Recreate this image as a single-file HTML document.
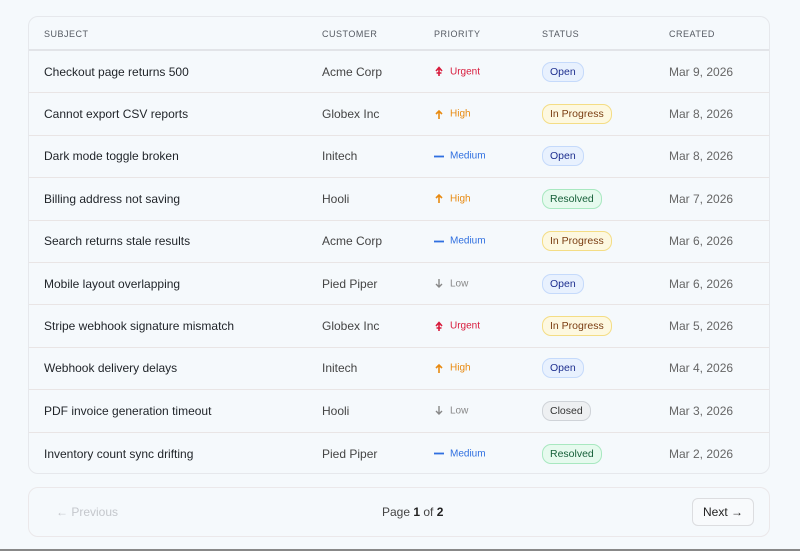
<!DOCTYPE html>
<html><head><style>
*{margin:0;padding:0;box-sizing:border-box}
body{width:800px;height:551px;background:#f5f9fc;font-family:"Liberation Sans",sans-serif;position:relative;overflow:hidden;color:#1f2328}
.card{position:absolute;left:28px;top:16px;width:742px;height:458px;border:1px solid #e6e8ec;border-radius:10px}
.hdr{position:absolute;top:0;left:0;right:0;height:34px;border-bottom:2px solid #e2e4e8}
.hdr span{position:absolute;top:12px;font-size:9px;letter-spacing:.5px;color:#555a62}
.row{position:absolute;left:0;right:0;height:42.4px;border-bottom:1px solid #e9e5e5}
.row span{position:absolute;top:50%;transform:translateY(-50%);font-size:12px;white-space:nowrap}
.c1{left:15px;color:#1f2328}.c2{left:293px;color:#444}.c5{left:640px;color:#666}
.pr{left:405px;font-size:10px!important;display:flex;align-items:center;gap:6px}
.pr svg{width:10px;height:10px}
.b{left:513px;font-size:10.5px!important;padding:3px 7px;border-radius:9px;border:1px solid}
.open{background:#e8f1fe;border-color:#c5dafb!important;color:#1e2f8f}
.prog{background:#fdf8e0;border-color:#f4dd85!important;color:#7a3d12}
.res{background:#e6faee;border-color:#a8e8c0!important;color:#17603a}
.cl{background:#eef0f2;border-color:#cfd3d8!important;color:#333}
.u{color:#d81b3c}.h{color:#e88a10}.m{color:#2f6fe0}.l{color:#888}
.pag{position:absolute;left:28px;top:487px;width:742px;height:50px;border:1px solid #ebe8ea;border-radius:10px}
</style></head><body>
<svg width="0" height="0" style="position:absolute"><defs>
<symbol id="ur" viewBox="0 0 10 10"><path d="M5 9.5V1M2 4.5L5 1l3 3.5M2.5 6.5h5" stroke="currentColor" stroke-width="1.6" fill="none"/></symbol>
<symbol id="up" viewBox="0 0 10 10"><path d="M5 9.5V1.5M2 4.5l3-3 3 3" stroke="currentColor" stroke-width="1.6" fill="none"/></symbol>
<symbol id="dn" viewBox="0 0 10 10"><path d="M5 .5v8M2 5.5l3 3 3-3" stroke="currentColor" stroke-width="1.4" fill="none"/></symbol>
<symbol id="md" viewBox="0 0 10 10"><path d="M0 5h10" stroke="currentColor" stroke-width="1.8"/></symbol>
</defs></svg>
<div class="card">
<div class="hdr"><span style="left:15px">SUBJECT</span><span style="left:293px">CUSTOMER</span><span style="left:405px">PRIORITY</span><span style="left:513px">STATUS</span><span style="left:640px">CREATED</span></div>
<div class="row" style="top:34px"><span class="c1">Checkout page returns 500</span><span class="c2">Acme Corp</span><span class="pr u"><svg><use href="#ur"/></svg>Urgent</span><span class="b open">Open</span><span class="c5">Mar 9, 2026</span></div>
<div class="row" style="top:76.4px"><span class="c1">Cannot export CSV reports</span><span class="c2">Globex Inc</span><span class="pr h"><svg><use href="#up"/></svg>High</span><span class="b prog">In Progress</span><span class="c5">Mar 8, 2026</span></div>
<div class="row" style="top:118.8px"><span class="c1">Dark mode toggle broken</span><span class="c2">Initech</span><span class="pr m"><svg><use href="#md"/></svg>Medium</span><span class="b open">Open</span><span class="c5">Mar 8, 2026</span></div>
<div class="row" style="top:161.2px"><span class="c1">Billing address not saving</span><span class="c2">Hooli</span><span class="pr h"><svg><use href="#up"/></svg>High</span><span class="b res">Resolved</span><span class="c5">Mar 7, 2026</span></div>
<div class="row" style="top:203.6px"><span class="c1">Search returns stale results</span><span class="c2">Acme Corp</span><span class="pr m"><svg><use href="#md"/></svg>Medium</span><span class="b prog">In Progress</span><span class="c5">Mar 6, 2026</span></div>
<div class="row" style="top:246px"><span class="c1">Mobile layout overlapping</span><span class="c2">Pied Piper</span><span class="pr l"><svg><use href="#dn"/></svg>Low</span><span class="b open">Open</span><span class="c5">Mar 6, 2026</span></div>
<div class="row" style="top:288.4px"><span class="c1">Stripe webhook signature mismatch</span><span class="c2">Globex Inc</span><span class="pr u"><svg><use href="#ur"/></svg>Urgent</span><span class="b prog">In Progress</span><span class="c5">Mar 5, 2026</span></div>
<div class="row" style="top:330.8px"><span class="c1">Webhook delivery delays</span><span class="c2">Initech</span><span class="pr h"><svg><use href="#up"/></svg>High</span><span class="b open">Open</span><span class="c5">Mar 4, 2026</span></div>
<div class="row" style="top:373.2px"><span class="c1">PDF invoice generation timeout</span><span class="c2">Hooli</span><span class="pr l"><svg><use href="#dn"/></svg>Low</span><span class="b cl">Closed</span><span class="c5">Mar 3, 2026</span></div>
<div class="row" style="top:415.6px;border-bottom:none"><span class="c1">Inventory count sync drifting</span><span class="c2">Pied Piper</span><span class="pr m"><svg><use href="#md"/></svg>Medium</span><span class="b res">Resolved</span><span class="c5">Mar 2, 2026</span></div>
</div>
<div class="pag">
<span style="position:absolute;left:27px;top:17px;font-size:12px;color:#c4c7cc">← Previous</span>
<span style="position:absolute;left:353px;top:17px;font-size:12px;color:#444">Page <b style="color:#222">1</b> of <b style="color:#222">2</b></span>
<span style="position:absolute;left:663px;top:10px;width:62px;height:28px;border:1px solid #dcdde0;border-radius:6px;background:#f8fafc;font-size:12px;line-height:26px;text-align:center;color:#222">Next →</span>
</div>
<div style="position:absolute;left:0;right:0;bottom:0;height:2px;background:#888"></div>
</body></html>
